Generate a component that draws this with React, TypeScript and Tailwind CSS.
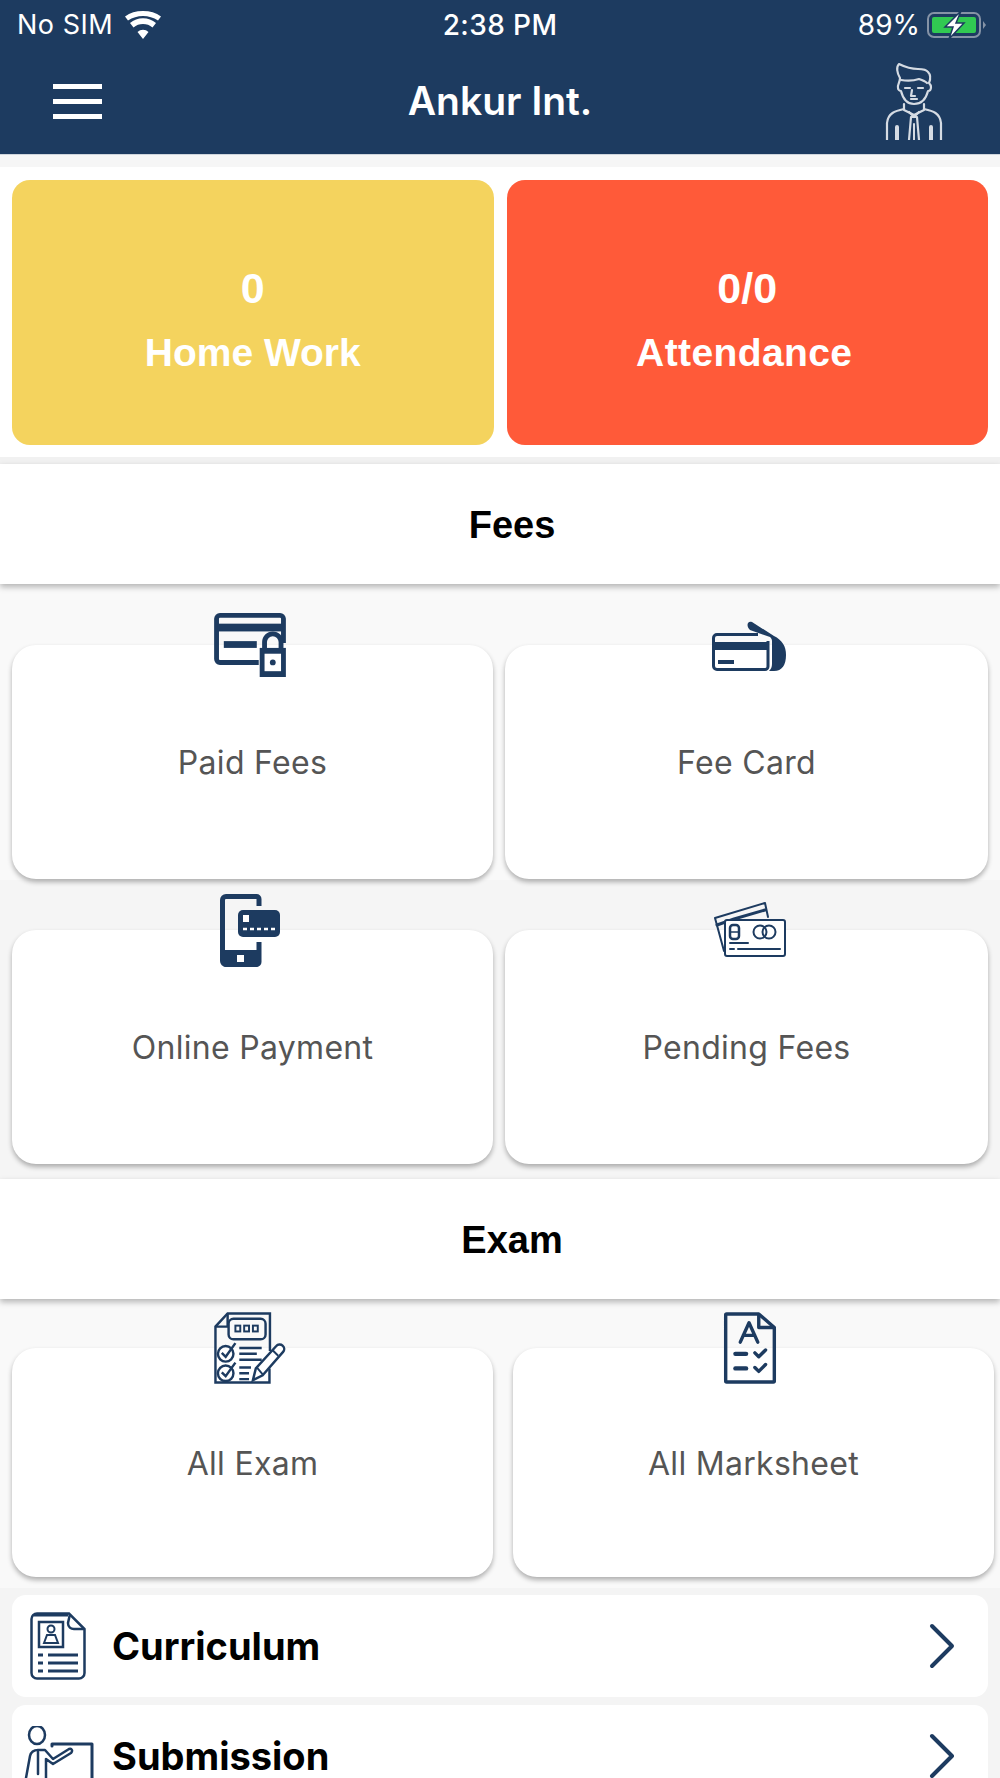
import React from 'react';

const navy = '#1d3b60';

const PaidFeesIcon = () => (
  <svg width="74" height="64" viewBox="0 0 74 66" fill="none">
    <path d="M46 51H6a3.500 3.500 0 0 1-3.500-3.500V6A3.500 3.500 0 0 1 6 2.500h62A3.500 3.500 0 0 1 71.500 6v25" stroke={navy} strokeWidth="5" />
    <rect x="3" y="11" width="68" height="8" fill={navy} />
    <rect x="10" y="29" width="34" height="7" fill={navy} />
    <path d="M47 36h27v30H47z" fill={navy} />
    <path d="M52 36v-6a8.500 8.500 0 0 1 17 0v6" stroke={navy} strokeWidth="5" />
    <rect x="52" y="42" width="17" height="18" fill="#fff" />
    <circle cx="60.500" cy="51" r="3" fill={navy} />
  </svg>
);

const FeeCardIcon = () => (
  <svg width="74" height="50" viewBox="0 0 74 50" fill="none">
    <path d="M40 1l22 14c8 4 12 10 12 19 0 10-4 16-12 16h-5c2-2 3-4 3-7V20c0-2-1-3-2-4L38 9c-4-3-3-10 2-8z" fill={navy} />
    <path d="M46 13.500H5a3.500 3.500 0 0 0-3.500 3.500v28A3.500 3.500 0 0 0 5 48.500h48a3 3 0 0 0 3-3V20" stroke={navy} strokeWidth="3" />
    <rect x="2" y="21" width="53" height="8" fill={navy} />
    <rect x="6" y="39" width="16" height="4" fill={navy} />
  </svg>
);

const OnlinePayIcon = () => (
  <svg width="60" height="73" viewBox="0 0 60 73" fill="none">
    <path d="M39 12V5a2.500 2.500 0 0 0-2.500-2.500H6A3.500 3.500 0 0 0 2.500 6v61A3.500 3.500 0 0 0 6 70.500h30.500a2.500 2.500 0 0 0 2.500-2.500V48" stroke={navy} strokeWidth="5" />
    <path d="M3 56h36v14a3 3 0 0 1-3 3H6a3 3 0 0 1-3-3z" fill={navy} />
    <rect x="17" y="61" width="7" height="7" fill="#fff" />
    <rect x="18" y="16" width="42" height="27" rx="5" fill={navy} />
    <rect x="23" y="21" width="6" height="7" fill="#fff" />
    <path d="M23 35h4M30 35h4M37 35h4M44 35h4M51 35h4" stroke="#fff" strokeWidth="2.500" />
  </svg>
);

const PendingFeesIcon = () => (
  <svg width="74" height="56" viewBox="0 0 74 56" fill="none" stroke={navy} strokeLinecap="round" strokeLinejoin="round">
    <path d="M11 49L2 16l50-15 3 14" strokeWidth="2" />
    <path d="M4 23l17-6 31-9" strokeWidth="3" />
    <rect x="12" y="18" width="60" height="36" rx="2" strokeWidth="2" fill="#fff" />
    <rect x="17" y="23" width="9" height="14" rx="3" strokeWidth="2.500" />
    <path d="M17 30h9" strokeWidth="1.500" />
    <circle cx="47" cy="30" r="6.500" strokeWidth="2" />
    <circle cx="56" cy="30" r="6.500" strokeWidth="2" />
    <path d="M17 41h18" strokeWidth="2" />
    <path d="M17 47h4M25 47h42" strokeWidth="2" />
  </svg>
);

const AllExamIcon = () => (
  <svg width="74" height="72" viewBox="0 0 74 74" fill="none" stroke={navy}>
    <path d="M57 58v14.500H1.500V15L14 1.500h43.500V40" strokeWidth="2.500" />
    <path d="M1.500 15H14V1.500" strokeWidth="2.500" />
    <rect x="15" y="7" width="38" height="21" rx="5" strokeWidth="2.500" />
    <rect x="22" y="14" width="5" height="6" strokeWidth="2" />
    <rect x="31" y="14" width="5" height="6" strokeWidth="2" />
    <rect x="40" y="14" width="5" height="6" strokeWidth="2" />
    <circle cx="12" cy="43" r="8" strokeWidth="2.500" />
    <path d="M8 42l4 4 10-14" strokeWidth="2.500" />
    <path d="M26 37h23M26 43h18M26 49h23" strokeWidth="2.500" />
    <circle cx="12" cy="63" r="8" strokeWidth="2.500" />
    <path d="M8 62l4 4 10-14" strokeWidth="2.500" />
    <path d="M26 57h12M26 63h10M26 69h10" strokeWidth="2.500" />
    <path d="M40 70l3-12 21-23a4 4 0 0 1 7 6L50 65z" strokeWidth="2.500" fill="#fff" />
    <path d="M44 57l6 7M60 39l6 6" strokeWidth="2" />
  </svg>
);

const MarksheetIcon = () => (
  <svg width="54" height="72" viewBox="0 0 54 74" fill="none" stroke={navy} strokeLinecap="round" strokeLinejoin="round">
    <path d="M36 2H3a1 1 0 0 0-1 1v68a1 1 0 0 0 1 1h48a1 1 0 0 0 1-1V16z" strokeWidth="3.500" />
    <path d="M36 3v13h15" strokeWidth="3.500" />
    <path d="M17 31l9-20 9 20M20 24h12" strokeWidth="3.500" />
    <path d="M12 43h11" strokeWidth="4.500" />
    <path d="M32 42l4 4 7-7" strokeWidth="3.500" />
    <path d="M12 58h11" strokeWidth="4.500" />
    <path d="M32 57l4 4 7-7" strokeWidth="3.500" />
  </svg>
);

const CurriculumIcon = () => (
  <svg className="ml-[6px]" width="56" height="68" viewBox="0 0 56 68" fill="none" stroke={navy}>
    <path d="M39 1.500H7A5.500 5.500 0 0 0 1.500 7v54A5.500 5.500 0 0 0 7 66.500h42a5.500 5.500 0 0 0 5.500-5.500V17z" strokeWidth="2.500" />
    <path d="M4 3h34" strokeWidth="3" />
    <path d="M40 2l-2 9c0 4 3 6 6 6h10" strokeWidth="2.500" />
    <rect x="9" y="10" width="24" height="25" strokeWidth="2.500" />
    <circle cx="21" cy="17" r="3.500" strokeWidth="2" />
    <path d="M14 31l3-8h8l3 8z" strokeWidth="2" />
    <path d="M8 43h5M8 51h5M8 59h5" strokeWidth="3" />
    <path d="M18 43h30M18 51h30M18 59h30" strokeWidth="3" />
  </svg>
);

const SubmissionIcon = () => (
  <svg width="70" height="60" viewBox="0 0 70 60" fill="none" stroke={navy} strokeLinecap="round" strokeLinejoin="round">
    <ellipse cx="13" cy="9" rx="8" ry="9" strokeWidth="2.500" />
    <path d="M4 60l-2-8 4-22c1-4 4-6 8-6h7l8 9 16-10c3-1 4 2 2 4L29 38 22 33v27" strokeWidth="2.500" />
    <path d="M14 26v22" strokeWidth="2.500" />
    <path d="M28 20V18h40v38H34" strokeWidth="3" />
    <path d="M48 56l8 4" strokeWidth="3" />
  </svg>
);

const AvatarIcon = () => (
  <svg width="60" height="78" viewBox="0 0 60 78" fill="none" stroke="#d5dbe3" strokeWidth="2.200" strokeLinejoin="round" strokeLinecap="round">
    <path d="M15 2c-3 3-2 9 1 14 0 5-3 7-2 10 0 2 2 3 3 3 2 8 6 13 13 13s12-5 14-13c2 0 3-2 3-4 0-2-1-3-2-4 2-5 1-9-1-11-2-3-6-3-10-3-6 0-13-2-19-5z" />
    <path d="M17 18c6 1 12 1 18-1 3 1 6 2 8 4" />
    <path d="M21 26h5M34 26h5M28 28l-1 6h4M27 37h6" />
    <path d="M20 42v6l10 5 10-5v-6" />
    <path d="M20 47c-9 2-16 4-17 14v17M40 47c9 2 16 4 17 14v17" />
    <path d="M25 50l5 5 5-5M27 55h6M27 55l-2 23M33 55l2 23" />
    <path d="M13 65v13M47 65v13" strokeWidth="4" />
    <path d="M30 62v16" strokeWidth="2" />
  </svg>
);

const Chevron = () => (
  <svg width="26" height="46" viewBox="0 0 26 46" fill="none" stroke={navy} strokeWidth="4" strokeLinecap="round" strokeLinejoin="round">
    <path d="M3 3l20 20L3 43" />
  </svg>
);

const StatusBar = () => (
  <div className="flex items-center justify-between h-[50px] pl-[17px] pr-[13px] text-white text-[27px] font-normal [font-family:Inter,sans-serif]">
    <div className="flex-1 flex items-center gap-[12px]">
      <span className="tracking-[0.5px]">No SIM</span>
      <svg width="36" height="28" viewBox="0 0 36 28" fill="#fff">
        <path d="M18 28l-5.500-7a8 8 0 0 1 11 0zM8.500 16.500l-3.500-4.500a20 20 0 0 1 26 0l-3.500 4.500a15 15 0 0 0-19 0zM3 9.500L0 5.500C5 1.800 11 0 18 0s13 1.800 18 5.500l-3 4C28.500 6.500 23.500 5 18 5S7.500 6.500 3 9.500z" />
      </svg>
    </div>
    <span className="text-[28px] font-medium tracking-[0.4px] pr-[4px]">2:38 PM</span>
    <div className="flex-1 flex items-center justify-end gap-[7px]">
      <span className="text-[28px]">89%</span>
      <svg width="60" height="30" viewBox="0 0 60 30" fill="none">
        <rect x="1" y="3" width="52" height="24" rx="6" stroke="#8593a6" strokeWidth="2" />
        <rect x="5" y="7" width="44" height="16" rx="2" fill="#31c952" />
        <path d="M56 11l3 4-3 4z" fill="#8593a6" />
        <path d="M34 1L18 17h8l-4 12 15-16h-8z" fill="#fff" stroke={navy} strokeWidth="1.500" />
      </svg>
    </div>
  </div>
);

const Header = () => (
  <div className="bg-[#1d3b60] h-[155px] shrink-0 border-b border-[#cfd5dc]">
    <StatusBar />
    <div className="flex items-center h-[102px] pl-[53px] pr-[56px]">
      <div className="flex-1">
        <div className="flex flex-col gap-[10px] w-[49px]">
          <div className="h-[5px] bg-white" />
          <div className="h-[5px] bg-white" />
          <div className="h-[5px] bg-white" />
        </div>
      </div>
      <span className="text-white text-[39px] font-semibold ml-[3px] [font-family:Inter,sans-serif]">Ankur Int.</span>
      <div className="flex-1 flex justify-end">
        <AvatarIcon />
      </div>
    </div>
  </div>
);

const StatCard = ({ value, label, color, labelClass }: { value: string; label: string; color: string; labelClass?: string }) => (
  <div className={`flex-1 h-[265px] rounded-[18px] pt-[16px] flex flex-col items-center justify-center gap-[21px] text-white font-bold text-[39px] leading-[44px] [font-family:'Liberation_Sans',sans-serif] ${color}`}>
    <span className="text-[43px]">{value}</span>
    <span className={labelClass}>{label}</span>
  </div>
);

const SectionTitle = ({ title }: { title: string }) => (
  <div className="relative z-10 shrink-0 bg-white h-[120px] pl-[24px] pt-[2px] flex items-center justify-center text-black text-[38px] font-bold [font-family:'Liberation_Sans',sans-serif] shadow-[0_3px_6px_rgba(0,0,0,0.28)]">
    {title}
  </div>
);

const MenuCard = ({ label, icon, cardClass, iconClass }: { label: string; icon: React.ReactNode; cardClass: string; iconClass: string }) => (
  <div className={`relative shrink-0 bg-white rounded-[24px] flex items-center justify-center shadow-[0_3px_5px_rgba(0,0,0,0.3)] ${cardClass}`}>
    <div className={`absolute left-0 right-0 flex justify-center ${iconClass}`}>{icon}</div>
    <span className="text-[#555] text-[32px] tracking-[0.3px] pt-[2px] [font-family:Inter,sans-serif]">{label}</span>
  </div>
);

const ListRow = ({ label, icon }: { label: string; icon: React.ReactNode }) => (
  <div className="bg-white rounded-[14px] h-[102px] shrink-0 flex items-center pl-[12px] pr-[33px]">
    <div className="w-[88px] flex justify-start">{icon}</div>
    <span className="flex-1 text-black text-[38px] font-bold [font-family:Inter,sans-serif]">{label}</span>
    <Chevron />
  </div>
);

export default function App() {
  return (
    <div className="w-[1000px] h-[1778px] overflow-hidden bg-[#f4f4f4] flex flex-col">
      <Header />
      <div className="h-[12px] shrink-0 bg-[#f6f6f6]" />

      <div className="bg-white h-[290px] shrink-0 px-[12px] flex items-center gap-[13px]">
        <StatCard value="0" label="Home Work" color="bg-[#f4d35e]" />
        <StatCard value="0/0" label="Attendance" color="bg-[#ff5a39]" labelClass="mr-[6px] tracking-[0.4px]" />
      </div>
      <div className="h-[7px] shrink-0 bg-[#f1f1f1]" />

      <SectionTitle title="Fees" />
      <div className="bg-[#f9f9f9] h-[296px] shrink-0 pt-[61px] px-[12px] flex gap-[12px]">
        <MenuCard label="Paid Fees" icon={<PaidFeesIcon />} cardClass="w-[481px] h-[234px]" iconClass="-top-[32px] pr-[5px]" />
        <MenuCard label="Fee Card" icon={<FeeCardIcon />} cardClass="w-[483px] h-[234px]" iconClass="-top-[24px] pl-[5px]" />
      </div>
      <div className="bg-[#f5f5f5] h-[299px] shrink-0 pt-[50px] px-[12px] flex gap-[12px]">
        <MenuCard label="Online Payment" icon={<OnlinePayIcon />} cardClass="w-[481px] h-[234px]" iconClass="-top-[36px] pr-[6px]" />
        <MenuCard label="Pending Fees" icon={<PendingFeesIcon />} cardClass="w-[483px] h-[234px]" iconClass="-top-[28px] pl-[7px]" />
      </div>

      <SectionTitle title="Exam" />
      <div className="bg-[#f9f9f9] h-[289px] shrink-0 pt-[49px] px-[12px] flex gap-[20px]">
        <MenuCard label="All Exam" icon={<AllExamIcon />} cardClass="w-[481px] h-[229px]" iconClass="-top-[36px] pr-[6px]" />
        <MenuCard label="All Marksheet" icon={<MarksheetIcon />} cardClass="w-[481px] h-[229px]" iconClass="-top-[36px] pr-[8px]" />
      </div>

      <div className="flex flex-col gap-[8px] pt-[7px] px-[12px]">
        <ListRow label="Curriculum" icon={<CurriculumIcon />} />
        <ListRow label="Submission" icon={<SubmissionIcon />} />
      </div>
    </div>
  );
}
